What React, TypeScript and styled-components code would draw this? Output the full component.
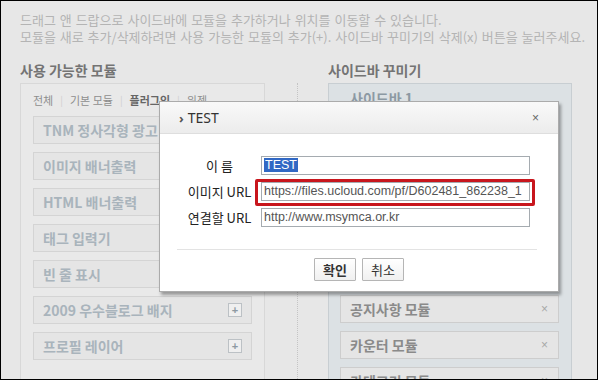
import React from "react";
import styled, { createGlobalStyle } from "styled-components";

const GlobalStyle = createGlobalStyle`
  html, body {
    margin: 0;
    padding: 0;
    background: #fff;
  }
  body {
    font-family: "Noto Sans CJK KR", "Noto Sans", sans-serif;
  }
  * {
    box-sizing: border-box;
  }
`;

const Screen = styled.div`
  position: relative;
  width: 598px;
  height: 380px;
  border: 1px solid #000;
  background: #e7e7e7;
  overflow: hidden;
  padding: 10px 0 0 19px;
`;

const Guide = styled.p`
  margin: 0;
  font-size: 13px;
  line-height: 17px;
  word-spacing: 1px;
  color: #b4b4b4;
  white-space: nowrap;
`;

const Columns = styled.div`
  display: grid;
  grid-template-columns: 245px 63px 244px;
  margin-top: 16px;
`;

const Heading = styled.h3`
  margin: 0 0 4px;
  font-size: 14px;
  line-height: 18px;
  font-weight: bold;
  color: #747474;
`;

const Divider = styled.div`
  justify-self: start;
  margin: 22px 0 0 32px;
  width: 0;
  height: 320px;
  border-left: 1px dotted #c4c4c4;
`;

const Panel = styled.div<{ $blue?: boolean }>`
  height: 320px;
  border: 1px solid ${(p) => (p.$blue ? "#c8ced2" : "#d8d8d8")};
  background: ${(p) => (p.$blue ? "#dce1e4" : "#e9e9e9")};
  padding: ${(p) => (p.$blue ? "5px 12px 0 11px" : "8px 12px 0")};
`;

const Tabs = styled.div`
  display: flex;
  align-items: center;
  margin-bottom: 8px;
  font-size: 11px;
  line-height: 16px;
  color: #8e8e8e;
  white-space: nowrap;
`;

const Tab = styled.span<{ $active?: boolean }>`
  font-weight: ${(p) => (p.$active ? "bold" : "normal")};
  color: ${(p) => (p.$active ? "#666" : "#8e8e8e")};
`;

const TabBar = styled.span`
  margin: 0 7px;
  color: #cfcfcf;
  font-size: 10px;
`;

const GroupTitle = styled.div`
  padding-left: 10px;
  margin-bottom: 8px;
  font-size: 14px;
  line-height: 18px;
  font-weight: bold;
  color: #8c99a3;
`;

const ModuleList = styled.ul`
  list-style: none;
  margin: 0;
  padding: 0;
  display: flex;
  flex-direction: column;
  gap: 8px;
`;

const ModuleItem = styled.li<{ $blue?: boolean }>`
  height: 28px;
  display: flex;
  align-items: center;
  justify-content: space-between;
  padding: 0 9px;
  border: 1px solid ${(p) => (p.$blue ? "#cdcdcd" : "#d4d4d4")};
  background: #e5e5e5;
  font-size: 14px;
  font-weight: bold;
  color: ${(p) => (p.$blue ? "#8a8a8a" : "#a9b4bc")};
  white-space: nowrap;
`;

const AddButton = styled.span`
  width: 14px;
  height: 14px;
  display: flex;
  align-items: center;
  justify-content: center;
  border: 1px solid #bcc1c5;
  background: #efefef;
  color: #8d99a2;
  font-family: "Liberation Sans", sans-serif;
  font-size: 11px;
  font-weight: bold;
`;

const RemoveMark = styled.span`
  color: #a8a8a8;
  font-family: "Liberation Sans", sans-serif;
  font-size: 12px;
  font-weight: normal;
  margin-right: 1px;
`;

const Dialog = styled.div`
  position: absolute;
  left: 158px;
  top: 100px;
  width: 400px;
  background: #fff;
  border: 1px solid #ababab;
  box-shadow: 2px 3px 3px rgba(0, 0, 0, 0.35);
`;

const DialogHeader = styled.div`
  height: 32px;
  display: flex;
  align-items: center;
  justify-content: space-between;
  padding: 0 19px 0 19px;
  background: linear-gradient(#f9f9f9, #ececec);
  border-bottom: 1px solid #dedede;
`;

const DialogTitle = styled.div`
  display: flex;
  align-items: center;
  font-family: "Noto Sans", sans-serif;
  font-size: 14px;
  color: #333;
`;

const Chevron = styled.span`
  margin-right: 4px;
  font-size: 13px;
  font-weight: bold;
  color: #555;
`;

const CloseMark = styled.span`
  font-family: "Liberation Sans", sans-serif;
  font-size: 12px;
  color: #666;
`;

const Form = styled.div`
  display: grid;
  grid-template-columns: 65px 269px;
  column-gap: 9px;
  row-gap: 7px;
  padding: 22px 0 0 27px;
`;

const Label = styled.span`
  text-align: center;
  font-size: 13px;
  line-height: 19px;
  color: #222;
  white-space: nowrap;
`;

const Field = styled.div<{ $marked?: boolean }>`
  position: relative;
  height: 19px;
  padding: 0 2px;
  border: 1px solid #a5abb0;
  font-family: "Liberation Sans", sans-serif;
  font-size: 12.5px;
  line-height: 17px;
  color: #555;
  white-space: nowrap;

  &::after {
    content: "";
    display: ${(p) => (p.$marked ? "block" : "none")};
    position: absolute;
    inset: -4px -6px -6px -7px;
    border: 3px solid #c8161d;
    border-radius: 2px;
  }
`;

const Selected = styled.span`
  background: #3168c4;
  color: #fff;
  padding: 0 1px;
`;

const Rule = styled.hr`
  margin: 22px 21px 0 17px;
  border: 0;
  border-top: 1px solid #e3e3e3;
`;

const Actions = styled.div`
  display: flex;
  justify-content: center;
  gap: 6px;
  padding: 8px 0 10px;
`;

const Button = styled.button<{ $primary?: boolean }>`
  height: 23px;
  padding: 0 8px;
  border: 1px solid #b5b5b5;
  border-radius: 1px;
  background: linear-gradient(#ffffff, #f0f0f0);
  font-family: "Noto Sans CJK KR", sans-serif;
  font-size: 13px;
  font-weight: ${(p) => (p.$primary ? "bold" : "normal")};
  color: #333;
`;

const available = [
  "TNM 정사각형 광고",
  "이미지 배너출력",
  "HTML 배너출력",
  "태그 입력기",
  "빈 줄 표시",
  "2009 우수블로그 배지",
  "프로필 레이어",
];

const sidebar = [
  "검색 모듈",
  "태그 구름",
  "최근에 올라온 글",
  "최근에 달린 댓글",
  "글 보관함",
  "공지사항 모듈",
  "카운터 모듈",
  "카테고리 모듈",
];

export default function App() {
  return (
    <>
      <GlobalStyle />
      <Screen>
        <Guide>드래그 앤 드랍으로 사이드바에 모듈을 추가하거나 위치를 이동할 수 있습니다.</Guide>
        <Guide>
          모듈을 새로 추가/삭제하려면 사용 가능한 모듈의 추가(+). 사이드바 꾸미기의 삭제(x) 버튼을 눌러주세요.
        </Guide>

        <Columns>
          <section>
            <Heading>사용 가능한 모듈</Heading>
            <Panel>
              <Tabs>
                <Tab>전체</Tab>
                <TabBar>|</TabBar>
                <Tab>기본 모듈</Tab>
                <TabBar>|</TabBar>
                <Tab $active>플러그인</Tab>
                <TabBar>|</TabBar>
                <Tab>위젯</Tab>
              </Tabs>
              <ModuleList>
                {available.map((m) => (
                  <ModuleItem key={m}>
                    {m}
                    <AddButton>+</AddButton>
                  </ModuleItem>
                ))}
              </ModuleList>
            </Panel>
          </section>

          <Divider />

          <section>
            <Heading>사이드바 꾸미기</Heading>
            <Panel $blue>
              <GroupTitle>사이드바 1</GroupTitle>
              <ModuleList>
                {sidebar.map((m) => (
                  <ModuleItem key={m} $blue>
                    {m}
                    <RemoveMark>×</RemoveMark>
                  </ModuleItem>
                ))}
              </ModuleList>
            </Panel>
          </section>
        </Columns>

        <Dialog>
          <DialogHeader>
            <DialogTitle>
              <Chevron>›</Chevron>
              TEST
            </DialogTitle>
            <CloseMark>×</CloseMark>
          </DialogHeader>
          <Form>
            <Label>이 름</Label>
            <Field>
              <Selected>TEST</Selected>
            </Field>
            <Label>이미지 URL</Label>
            <Field $marked>https://files.ucloud.com/pf/D602481_862238_1</Field>
            <Label>연결할 URL</Label>
            <Field>http://www.msymca.or.kr</Field>
          </Form>
          <Rule />
          <Actions>
            <Button $primary>확인</Button>
            <Button>취소</Button>
          </Actions>
        </Dialog>
      </Screen>
    </>
  );
}
